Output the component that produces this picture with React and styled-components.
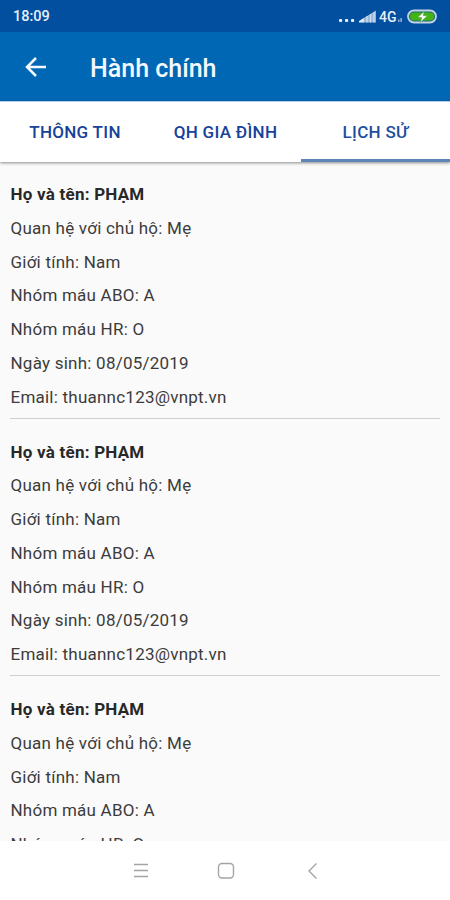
import React, { useState } from "react";
import styled, { createGlobalStyle } from "styled-components";

const GlobalStyle = createGlobalStyle`
* {
  box-sizing: border-box;
}
body {
  margin: 0;
  font-family: Roboto, "Noto Sans", sans-serif;
}
`

const Screen = styled.div`
width: 450px;
height: 900px;
display: flex;
flex-direction: column;
overflow: hidden;
background-color: #fafafa;
`

const StatusBar = styled.div`
flex: none;
height: 32px;
padding: 1px 11px 0 13px;
display: flex;
align-items: center;
justify-content: space-between;
background-color: #014f9e;
color: #e6effa;
`
const Clock = styled.span`
font-size: 14.5px;
font-weight: 500;
`
const StatusIcons = styled.svg`
display: block;
`

const AppBar = styled.header`
flex: none;
height: 69px;
padding: 1px 25px 0;
display: flex;
align-items: center;
background-color: #0067b4;
color: #f4f9ff;
`
const BackButton = styled.button`
width: 22px;
height: 22px;
padding: 0;
border: 0;
background: none;
color: inherit;
`
const Title = styled.h1`
margin: 3px 0 0 43px;
font-size: 25px;
font-weight: 500;
`

const Tabs = styled.nav`
flex: none;
height: 61px;
display: grid;
grid-template-columns: 150px 151px 149px;
background-color: #fff;
border-top: 1px solid #b5cfea;
box-shadow: 0 1px 3px rgba(0, 0, 0, 0.45);
z-index: 1;
`
const Tab = styled.button`
padding: 3px 0 0;
border: 0;
border-bottom: 3px solid ${(props) => (props.$active ? "#5f84b8" : "transparent")};
background: none;
color: ${(props) => (props.$active ? "#1e4f9f" : "#16429a")};
font-family: inherit;
font-size: 17px;
font-weight: 500;
letter-spacing: 0.3px;
`

const List = styled.main`
flex: none;
height: 679px;
padding: 16px 10px 0;
overflow: hidden;
`
const Record = styled.section`
height: 257.5px;
`
const Line = styled.div`
height: 33.75px;
padding-left: 0.5px;
line-height: 33.75px;
font-size: 17px;
letter-spacing: 0.23px;
color: #3c3c3c;
white-space: nowrap;
`
const Name = styled(Line)`
font-weight: 700;
color: #282828;
`
const Divider = styled.div`
height: 1px;
margin-top: 3.5px;
background-color: #cfcfcf;
`

const NavBar = styled.footer`
flex: 1;
padding: 0 127px 0 131px;
display: flex;
align-items: center;
justify-content: space-between;
background-color: #fff;
color: #a4a4a4;
`
const NavIcon = styled.svg`
width: 20px;
height: 20px;
margin-top: 1px;
fill: none;
stroke: currentColor;
stroke-width: 1.4;
`

const tabs = ["THÔNG TIN", "QH GIA ĐÌNH", "LỊCH SỬ"]

const member = {
  name: "PHẠM",
  relation: "Mẹ",
  gender: "Nam",
  abo: "A",
  hr: "O",
  birthday: "08/05/2019",
  email: "thuannc123@vnpt.vn",
}

const members = [member, member, member]

const MemberRecord = ({ data }) => (
  <Record>
    <Name>Họ và tên: {data.name}</Name>
    <Line>Quan hệ với chủ hộ: {data.relation}</Line>
    <Line>Giới tính: {data.gender}</Line>
    <Line>Nhóm máu ABO: {data.abo}</Line>
    <Line>Nhóm máu HR: {data.hr}</Line>
    <Line>Ngày sinh: {data.birthday}</Line>
    <Line>Email: {data.email}</Line>
    <Divider />
  </Record>
)

const PhoneStatus = () => (
  <StatusIcons width="101" height="20" viewBox="0 0 101 20">
    <g fill="#e6effa">
      <rect x="1" y="12" width="3.200" height="3" rx="1" />
      <rect x="7" y="12" width="3.200" height="3" rx="1" />
      <rect x="13" y="12" width="3.200" height="3" rx="1" />
      <path d="M21 15.500v-1.500l4-2.500v4z" />
      <path d="M25 15.500v-4l13-8v12z" opacity="0.65" />
      <path d="M25.500 15.500v-4.300M29 15.500V9M32.500 15.500V7M36 15.500V5" stroke="#e6effa" strokeWidth="1.300" opacity="0.7" />
      <text x="41" y="15.300" fontSize="14" fontWeight="500">4G</text>
      <path d="M60 15v-2.500h1.500V15zM62.300 15v-4h1.600v4z" opacity="0.6" />
    </g>
    <rect x="70" y="3.500" width="28" height="12" rx="6" fill="#1f6b78" stroke="#c3d3e6" strokeWidth="1.800" />
    <rect x="72" y="5.500" width="24" height="8" rx="4" fill="#43b414" />
    <path d="M86.300 4.500L79.500 10.600h4.200l-1.200 4.700 6.900-6.500h-4.200z" fill="#fff" stroke="#3c9c45" strokeWidth="0.500" />
  </StatusIcons>
)

const App = () => {
  const [active, setActive] = useState(2)

  return (
    <Screen>
      <GlobalStyle />
      <StatusBar>
        <Clock>18:09</Clock>
        <PhoneStatus />
      </StatusBar>
      <AppBar>
        <BackButton aria-label="Back">
          <svg width="22" height="22" viewBox="0 0 22 22" fill="none" stroke="currentColor" strokeWidth="2.5">
            <path d="M21 11H2.500M11 2L2 11l9 9" />
          </svg>
        </BackButton>
        <Title>Hành chính</Title>
      </AppBar>
      <Tabs>
        {tabs.map((label, i) => (
          <Tab key={label} $active={i === active} onClick={() => setActive(i)}>
            {label}
          </Tab>
        ))}
      </Tabs>
      <List>
        {members.map((m, i) => (
          <MemberRecord key={i} data={m} />
        ))}
      </List>
      <NavBar>
        <NavIcon viewBox="0 0 20 20">
          <path d="M3 3.500h14M3 9.500h14M3 15.500h14" />
        </NavIcon>
        <NavIcon viewBox="0 0 20 20">
          <rect x="1.500" y="2.500" width="15" height="14.500" rx="3.500" />
        </NavIcon>
        <NavIcon viewBox="0 0 20 20">
          <path d="M13.500 2.500L6 10l7.500 7.500" />
        </NavIcon>
      </NavBar>
    </Screen>
  )
}

export default App
